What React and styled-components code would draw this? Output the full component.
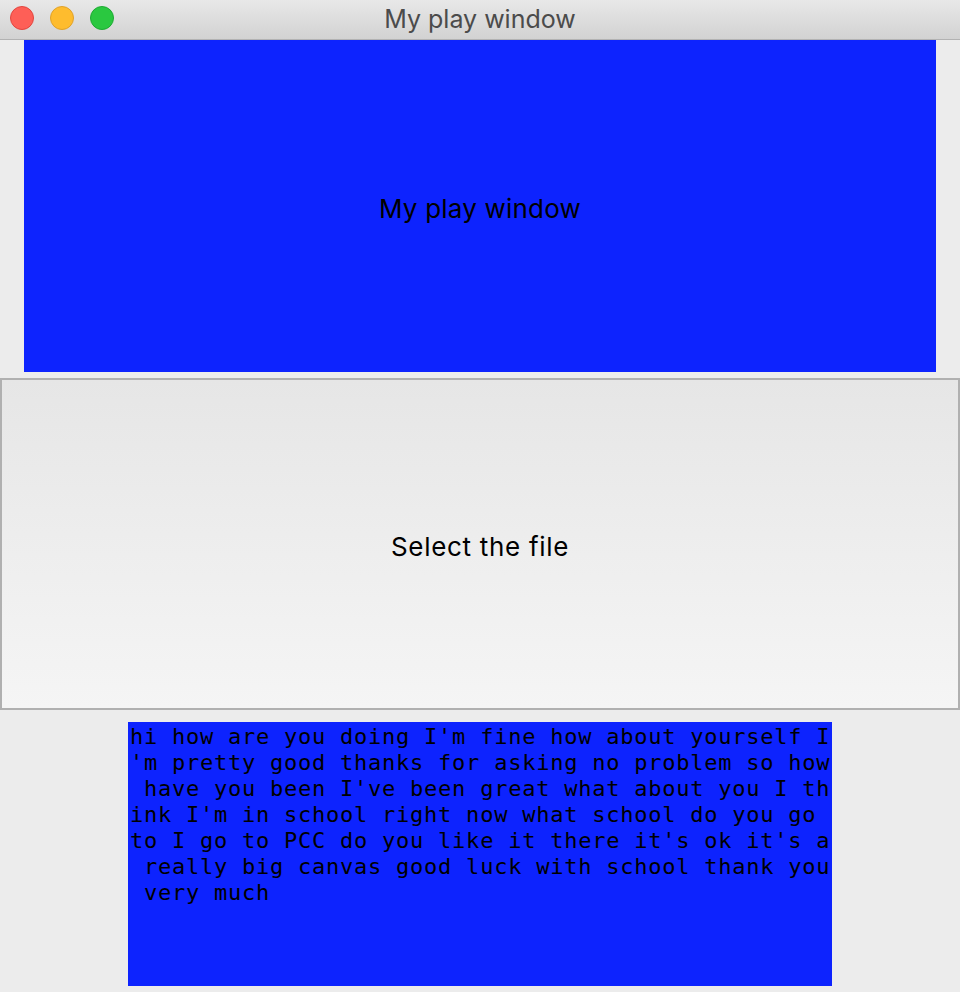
import React from "react";
import styled, { createGlobalStyle } from "styled-components";

const GlobalStyle = createGlobalStyle`
  html, body {
    margin: 0;
    padding: 0;
    background: #ececec;
  }
  * {
    box-sizing: border-box;
  }
`;

const Window = styled.div`
  width: 960px;
  height: 992px;
  display: flex;
  flex-direction: column;
  background: #ececec;
  font-family: Inter, "Noto Sans", sans-serif;
  overflow: hidden;
`;

const TitleBar = styled.div`
  position: relative;
  height: 40px;
  flex: 0 0 40px;
  display: flex;
  align-items: center;
  justify-content: center;
  background: linear-gradient(#e8e8e8, #d2d2d2);
  border-bottom: 1px solid #b2b2b2;
`;

const Lights = styled.div`
  position: absolute;
  left: 10px;
  top: 6px;
  display: flex;
  gap: 16px;
`;

const Light = styled.span`
  width: 24px;
  height: 24px;
  border-radius: 50%;
  background: ${(p) => p.color};
  border: 1px solid ${(p) => p.edge};
`;

const Title = styled.span`
  font-size: 25px;
  color: #4b4b4b;
  margin-top: -1px;
`;

const Content = styled.div`
  display: flex;
  flex-direction: column;
  align-items: center;
`;

const PlayPanel = styled.div`
  width: 912px;
  height: 332px;
  background: #0d23fe;
  display: flex;
  align-items: center;
  justify-content: center;
  font-size: 26px;
  letter-spacing: 0.2px;
  color: #000;
  padding-top: 5px;
`;

const FileButton = styled.button`
  margin-top: 6px;
  width: 960px;
  height: 332px;
  border: 2px solid #b0b0b0;
  background: linear-gradient(#e6e6e6, #f5f5f5);
  font-family: Inter, "Noto Sans", sans-serif;
  font-size: 26px;
  letter-spacing: 0.7px;
  color: #000;
  padding: 4px 0 0;
  cursor: pointer;
`;

const TextArea = styled.div`
  margin-top: 12px;
  width: 704px;
  height: 264px;
  background: #0d23fe;
  padding: 2px 0 0 2px;
  font-family: "DejaVu Sans Mono", monospace;
  font-size: 22px;
  letter-spacing: 0.76px;
  line-height: 26px;
  color: #000;
`;

const Line = styled.div`
  white-space: pre;
`;

const message =
  "hi how are you doing I'm fine how about yourself I'm pretty good thanks for asking no problem so how have you been I've been great what about you I think I'm in school right now what school do you go to I go to PCC do you like it there it's ok it's a really big canvas good luck with school thank you very much";

function chunk(text, size) {
  const out = [];
  for (let i = 0; i < text.length; i += size) out.push(text.slice(i, i + size));
  return out;
}

export default function App() {
  return (
    <>
      <GlobalStyle />
      <Window>
        <TitleBar>
          <Lights>
            <Light color="#fe5f57" edge="#e2463f" />
            <Light color="#febc2e" edge="#e0a22a" />
            <Light color="#2ac840" edge="#1eaa33" />
          </Lights>
          <Title>My play window</Title>
        </TitleBar>
        <Content>
          <PlayPanel>My play window</PlayPanel>
          <FileButton>Select the file</FileButton>
          <TextArea>
            {chunk(message, 50).map((l, i) => (
              <Line key={i}>{l}</Line>
            ))}
          </TextArea>
        </Content>
      </Window>
    </>
  );
}
